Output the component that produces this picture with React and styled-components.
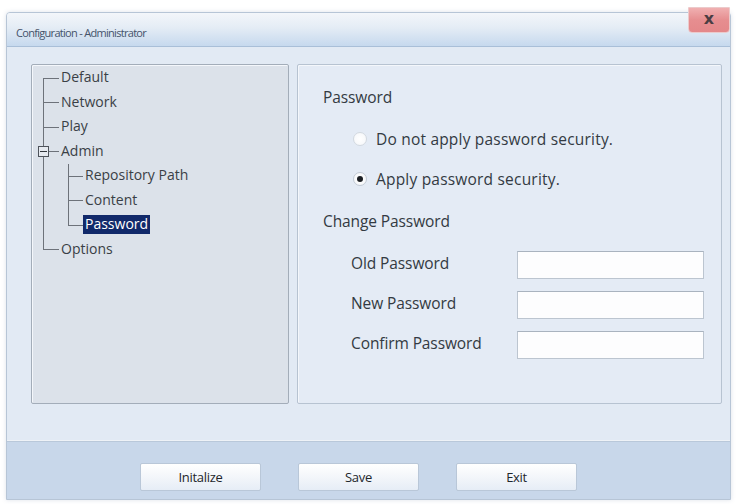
import React from 'react';
import styled, { createGlobalStyle } from 'styled-components';

const GlobalStyle = createGlobalStyle`
  html, body {
    margin: 0;
    padding: 0;
    background: #ffffff;
  }
  body {
    font-family: 'Open Sans', 'Noto Sans', sans-serif;
    color: #2b2b2b;
  }
`;

const Window = styled.div`
  position: relative;
  margin: 12px 6px 4px 6px;
  width: 725px;
  height: 488px;
  box-sizing: border-box;
  border: 1px solid #b7c5d6;
  border-radius: 4px 4px 0 0;
  display: flex;
  flex-direction: column;
  background: #e2eaf4;
  box-shadow: 0 0 4px rgba(120, 140, 170, 0.25);
`;

const TitleBar = styled.div`
  height: 34px;
  flex: none;
  display: flex;
  align-items: center;
  padding: 5px 0 0 9px;
  box-sizing: border-box;
  background: linear-gradient(to bottom, #f3f6fa 0%, #e4ecf5 45%, #c6d9ee 100%);
  border-bottom: 1px solid #a9bfd8;
  border-radius: 3px 3px 0 0;
`;

const Title = styled.span`
  font-size: 11px;
  letter-spacing: -0.7px;
  color: #44536a;
`;

const CloseButton = styled.div`
  position: absolute;
  top: -6px;
  right: 0;
  width: 42px;
  height: 26px;
  display: flex;
  align-items: center;
  justify-content: center;
  padding-bottom: 3px;
  background: linear-gradient(to bottom, #f0b0b1 0%, #e68e90 50%, #e4888a 100%);
  border: 1px solid #eccacb;
  border-radius: 0 0 4px 4px;
  box-sizing: border-box;
  font-family: 'DejaVu Sans', sans-serif;
  font-weight: bold;
  font-size: 16px;
  color: #4b3d42;
`;

const Body = styled.div`
  flex: 1;
  display: flex;
  gap: 8px;
  padding: 17px 8px 0 24px;
  box-sizing: border-box;
`;

const Panel = styled.div`
  height: 340px;
  box-sizing: border-box;
  border: 1px solid ${({ dark }) => (dark ? '#a3adb9' : '#b7c3d1')};
  border-radius: 2px;
  background: ${({ dark }) => (dark ? '#dce2ea' : '#e4ebf5')};
  box-shadow: inset 1px 1px 0 #f4f7fb;
`;

const TreePanel = styled(Panel)`
  width: 258px;
  padding: 0 0 0 10px;
`;

const TreeList = styled.div`
  display: flex;
  flex-direction: column;
  padding-top: 0.5px;
  font-size: 14px;
  color: #3a3f46;
`;

const TreeRow = styled.div`
  height: 24.5px;
  display: flex;
  align-items: stretch;
`;

const Guide = styled.div`
  position: relative;
  width: ${({ w }) => w || 17}px;
  flex: none;

  &::before {
    content: '';
    display: ${({ v }) => (v ? 'block' : 'none')};
    position: absolute;
    left: 1px;
    top: ${({ first }) => (first ? '50%' : '0')};
    bottom: ${({ last }) => (last ? '50%' : '0')};
    border-left: 1px solid #6d727a;
  }

  &::after {
    content: '';
    display: ${({ h }) => (h ? 'block' : 'none')};
    position: absolute;
    left: ${({ hStart }) => hStart || 1}px;
    right: 0;
    top: 50%;
    border-top: 1px solid #6d727a;
  }
`;

const Expander = styled.span`
  position: absolute;
  left: -4px;
  top: 50%;
  margin-top: -5px;
  width: 9px;
  height: 9px;
  border: 1px solid #4e535b;
  background: #e6eaf0;
  z-index: 1;

  &::after {
    content: '';
    position: absolute;
    left: 1px;
    right: 1px;
    top: 4px;
    border-top: 1px solid #33373d;
  }
`;

const NodeLabel = styled.span`
  align-self: center;
  padding: 0 2px 1px 2px;
  line-height: 18px;
  white-space: nowrap;
  background: ${({ selected }) => (selected ? '#11296a' : 'transparent')};
  color: ${({ selected }) => (selected ? '#ffffff' : 'inherit')};
`;

const FormPanel = styled(Panel)`
  width: 425px;
  padding: 22px 0 0 25px;
  font-size: 15.5px;
  letter-spacing: -0.1px;
  color: #333a42;
`;

const SectionLabel = styled.div`
  line-height: 20px;
  margin-top: ${({ mt }) => mt || 0}px;
  margin-bottom: ${({ mb }) => mb || 0}px;
`;

const RadioRow = styled.label`
  display: flex;
  align-items: center;
  gap: 9px;
  height: 20px;
  margin: 0 0 20px 30px;
  letter-spacing: 0.2px;
`;

const RadioDot = styled.span`
  width: 14px;
  height: 14px;
  box-sizing: border-box;
  border-radius: 50%;
  border: 1px solid ${({ checked }) => (checked ? '#c2cad4' : '#d3d9e0')};
  background: radial-gradient(circle, #ffffff 0%, #f4f6f9 100%);
  display: flex;
  align-items: center;
  justify-content: center;

  &::after {
    content: '';
    display: ${({ checked }) => (checked ? 'block' : 'none')};
    width: 6px;
    height: 6px;
    border-radius: 50%;
    background: #1c1f24;
  }
`;

const FieldGrid = styled.div`
  display: grid;
  grid-template-columns: 166px 187px;
  grid-auto-rows: 27px;
  row-gap: 13px;
  margin: 20px 0 0 28px;
  align-items: center;
`;

const FieldLabel = styled.span`
  line-height: 20px;
  margin-top: -4px;
`;

const TextBox = styled.input`
  height: 28px;
  box-sizing: border-box;
  border: 1px solid #bcc5d0;
  border-top-color: #a9b3bf;
  background: #fdfdfe;
  outline: none;
  padding: 0 4px;
  font: inherit;
`;

const Footer = styled.div`
  height: 59px;
  flex: none;
  box-sizing: border-box;
  border-top: 1px solid #eef2f7;
  box-shadow: inset 0 1px 0 #b9c8da;
  background: #c8d7ea;
  display: flex;
  gap: 37px;
  padding: 22px 0 0 133px;
`;

const Button = styled.button`
  width: 121px;
  height: 28px;
  box-sizing: border-box;
  border: 1px solid #b9c7d8;
  border-radius: 2px;
  background: linear-gradient(to bottom, #ffffff 0%, #f3f6fa 50%, #e6edf6 100%);
  font-family: 'Open Sans', sans-serif;
  font-size: 13px;
  letter-spacing: -0.3px;
  color: #22262b;
  padding: 0;
`;

const treeNodes = [
  { label: 'Default', first: true },
  { label: 'Network' },
  { label: 'Play' },
  { label: 'Admin', expander: true },
  { label: 'Repository Path', child: true },
  { label: 'Content', child: true },
  { label: 'Password', child: true, lastChild: true, selected: true },
  { label: 'Options', last: true },
];

const App = () => (
  <>
    <GlobalStyle />
    <Window>
      <TitleBar>
        <Title>Configuration - Administrator</Title>
      </TitleBar>
      <CloseButton>x</CloseButton>
      <Body>
        <TreePanel dark>
          <TreeList>
            {treeNodes.map((node) =>
              node.child ? (
                <TreeRow key={node.label}>
                  <Guide v w={25} />
                  <Guide v h last={node.lastChild} w={16} />
                  <NodeLabel selected={node.selected}>{node.label}</NodeLabel>
                </TreeRow>
              ) : (
                <TreeRow key={node.label}>
                  <Guide v h first={node.first} last={node.last} hStart={node.expander ? 6 : 1}>
                    {node.expander && <Expander />}
                  </Guide>
                  <NodeLabel>{node.label}</NodeLabel>
                </TreeRow>
              )
            )}
          </TreeList>
        </TreePanel>
        <FormPanel>
          <SectionLabel mb={22}>Password</SectionLabel>
          <RadioRow>
            <RadioDot />
            Do not apply password security.
          </RadioRow>
          <RadioRow>
            <RadioDot checked />
            Apply password security.
          </RadioRow>
          <SectionLabel mt={22}>Change Password</SectionLabel>
          <FieldGrid>
            <FieldLabel>Old Password</FieldLabel>
            <TextBox type="password" />
            <FieldLabel>New Password</FieldLabel>
            <TextBox type="password" />
            <FieldLabel>Confirm Password</FieldLabel>
            <TextBox type="password" />
          </FieldGrid>
        </FormPanel>
      </Body>
      <Footer>
        <Button>Initalize</Button>
        <Button>Save</Button>
        <Button>Exit</Button>
      </Footer>
    </Window>
  </>
);

export default App;
